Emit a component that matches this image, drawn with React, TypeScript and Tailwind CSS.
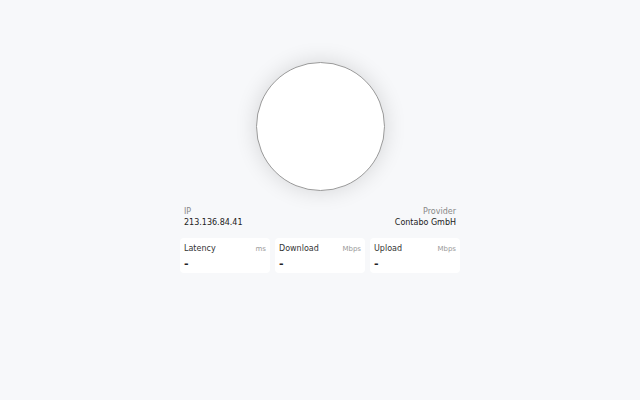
import React from 'react'

const stats = [
  { label: 'Latency', unit: 'ms' },
  { label: 'Download', unit: 'Mbps' },
  { label: 'Upload', unit: 'Mbps' },
]

export default function App() {
  return (
    <div
      className="min-h-screen w-full bg-[#f7f8fa] flex flex-col items-center"
      style={{ fontFamily: '"DejaVu Sans", sans-serif' }}
    >
      <div className="w-[280px] flex flex-col items-center pt-[62px]">
        <div className="w-[129px] h-[129px] rounded-full bg-white border border-[#9a9a9a] shadow-[0_0_22px_rgba(0,0,0,0.14)]" />

        <div className="w-full flex justify-between px-1 mt-[15px]">
          <div className="flex flex-col">
            <span className="text-[8px] leading-[11px] text-[#888]">IP</span>
            <span className="text-[8px] leading-[11px] text-[#222]">213.136.84.41</span>
          </div>
          <div className="flex flex-col items-end">
            <span className="text-[8px] leading-[11px] text-[#888]">Provider</span>
            <span className="text-[8px] leading-[11px] text-[#222]">Contabo GmbH</span>
          </div>
        </div>

        <div className="w-full grid grid-cols-3 gap-[5px] mt-[10px]">
          {stats.map(s => (
            <div key={s.label} className="bg-white rounded-[4px] h-[35px] px-1 pt-[5px]">
              <div className="flex justify-between items-baseline">
                <span className="text-[8px] leading-[11px] text-[#333]">{s.label}</span>
                <span className="text-[7px] text-[#999]">{s.unit}</span>
              </div>
              <div className="text-[11px] leading-[17px] text-[#222] font-bold">-</div>
            </div>
          ))}
        </div>
      </div>
    </div>
  )
}
